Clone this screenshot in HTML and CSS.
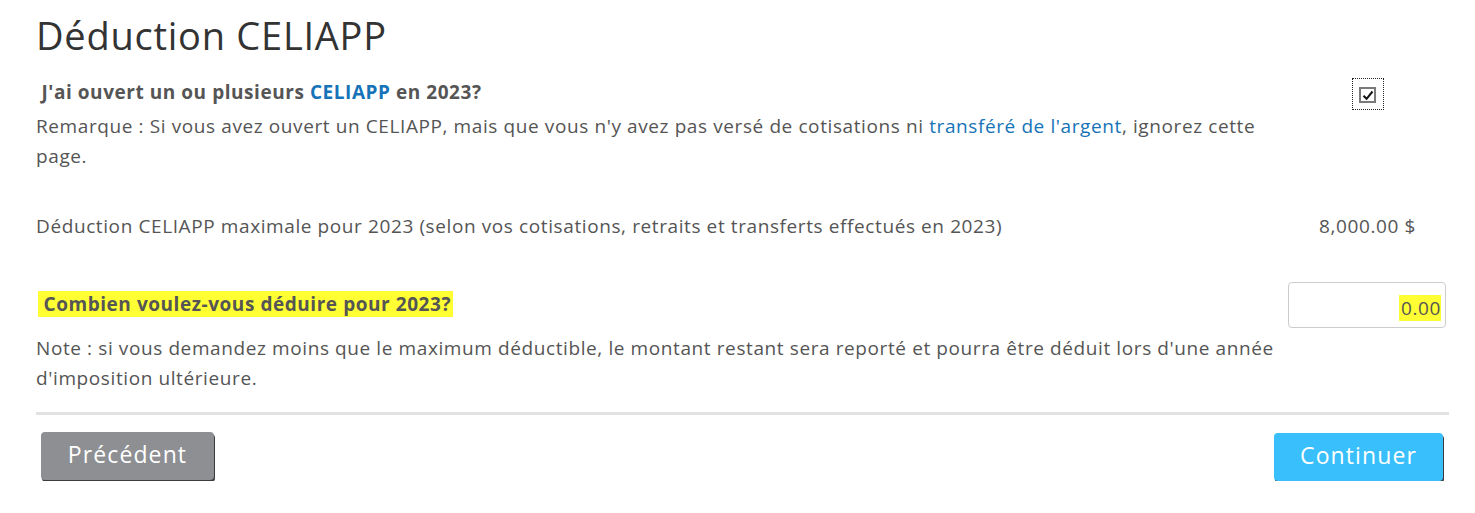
FILE: index.html
```html
<!DOCTYPE html>
<html lang="fr">
<head>
<meta charset="utf-8">
<title>Déduction CELIAPP</title>
<link rel="stylesheet" href="styles.css">
</head>
<body>
<div class="page">
  <h1 class="title">Déduction CELIAPP</h1>

  <div class="row row-q1">
    <div class="main">
      <div class="question">&nbsp;J'ai ouvert un ou plusieurs <a class="link strong" href="#">CELIAPP</a> en 2023?</div>
      <p class="note">Remarque : Si vous avez ouvert un CELIAPP, mais que vous n'y avez pas versé de cotisations ni <a class="link" href="#">transféré de l'argent</a>, ignorez cette page.</p>
    </div>
    <div class="side side-check">
      <span class="focus"><span class="checkbox"><svg width="12" height="11" viewBox="0 0 12 11"><path d="M1.5 5.8 L4.6 8.8 L10.5 1.5" fill="none" stroke="#111" stroke-width="2"/></svg></span></span>
    </div>
  </div>

  <div class="row row-max">
    <div class="main"><p class="text">Déduction CELIAPP maximale pour 2023 (selon vos cotisations, retraits et transferts effectués en 2023)</p></div>
    <div class="side side-amount">8,000.00 $</div>
  </div>

  <div class="row row-q2">
    <div class="main">
      <div class="question"><span class="hl">&nbsp;Combien voulez-vous déduire pour 2023?</span></div>
      <p class="note">Note : si vous demandez moins que le maximum déductible, le montant restant sera reporté et pourra être déduit lors d'une année d'imposition ultérieure.</p>
    </div>
    <div class="side side-input">
      <div class="input"><span class="hl-val">0.00</span></div>
    </div>
  </div>

  <hr class="divider">

  <div class="actions">
    <button class="btn btn-prev" type="button">Précédent</button>
    <button class="btn btn-next" type="button">Continuer</button>
  </div>
</div>
</body>
</html>
```

FILE: styles.css
```css
* { box-sizing: border-box; }
body {
  margin: 0;
  background: #fff;
  font-family: "Open Sans", "Noto Sans", sans-serif;
  color: #555;
}
.page {
  padding: 12px 26px 0 36px;
}
.title {
  margin: 0;
  font-size: 38px;
  font-weight: 400;
  letter-spacing: 0.75px;
  color: #333;
  line-height: 46px;
}
.row {
  display: flex;
  justify-content: space-between;
}
.main { flex: 1; max-width: 1250px; }
.question {
  font-size: 19px;
  font-weight: 700;
  letter-spacing: 0.55px;
  color: #555;
  line-height: 26px;
}
.note, .text {
  margin: 0;
  font-size: 19px;
  letter-spacing: 0.6px;
  line-height: 30px;
  color: #555;
}
.link { color: #1673b8; text-decoration: none; }
.link.strong { font-weight: 700; }
.row-q1 { margin-top: 21px; }
.row-q1 .note { margin-top: 6px; }
.side-check { padding-right: 65px; margin-top: -1px; }
.focus {
  display: inline-block;
  width: 32px;
  height: 32px;
  border: 1px dotted #222;
  padding: 8px 0 0 6px;
}
.checkbox {
  display: flex;
  align-items: center;
  justify-content: center;
  width: 17px;
  height: 16px;
  border: 2px solid #7a7a7a;
  background: #fff;
}
.row-max { margin-top: 40px; align-items: center; }
.side-amount { font-size: 19px; letter-spacing: 0.6px; color: #555; padding-right: 33px; }
.row-q2 { margin-top: 43px; }
.row-q2 .question { padding-top: 7px; margin-left: 2px; }
.row-q2 .note { margin-top: 16px; }
.hl { background: #ffff33; color: #555; padding-right: 2px; }
.side-input { padding-right: 3px; margin-top: -2px; }
.input {
  width: 158px;
  height: 46px;
  border: 1px solid #ccc;
  border-radius: 4px;
  display: flex;
  align-items: center;
  justify-content: flex-end;
  padding: 6px 4px 0 0;
  font-size: 19px;
  letter-spacing: 0.6px;
  color: #555;
}
.hl-val { background: #ffff33; padding-left: 2px; }
.divider {
  margin: 19px 0 0 0;
  border: 0;
  height: 3px;
  background: #e2e2e2;
}
.actions {
  display: flex;
  justify-content: space-between;
  align-items: flex-start;
  padding: 17px 6px 0 5px;
}
.btn {
  font-family: "Open Sans", "Noto Sans", sans-serif;
  font-size: 23px;
  letter-spacing: 1.1px;
  color: #fff;
  border: 0;
  border-radius: 4px;
  height: 48px;
  padding: 0 0 4px;
  box-shadow: 1px 2px 0 #3c3c3c;
}
.btn-prev { background: #8e8f93; width: 173px; }
.btn-next { background: #38bffc; width: 169px; margin-top: 1px; }
```
